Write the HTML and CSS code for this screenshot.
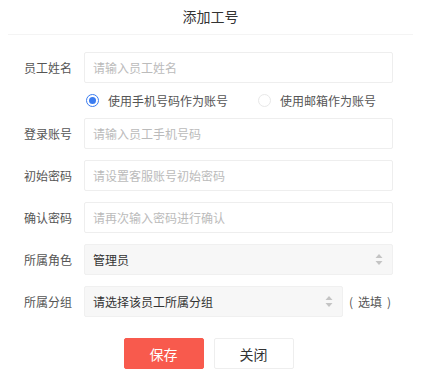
FILE: index.html
```html
<!DOCTYPE html>
<html>
	<head>
		<title>添加工号</title>
		<meta charset="UTF-8">
		<link rel="stylesheet" href="styles.css">
	</head>
	<body>
		<div class="title">添加工号</div>
		<form class="form">
			<div class="row">
				<label class="lbl">员工姓名</label>
				<input class="inp" type="text" placeholder="请输入员工姓名" />
			</div>
			<div class="radios">
				<span class="radio on"><i></i>使用手机号码作为账号</span>
				<span class="radio"><i></i>使用邮箱作为账号</span>
			</div>
			<div class="row">
				<label class="lbl">登录账号</label>
				<input class="inp" type="text" placeholder="请输入员工手机号码" />
			</div>
			<div class="row">
				<label class="lbl">初始密码</label>
				<input class="inp" type="text" placeholder="请设置客服账号初始密码" />
			</div>
			<div class="row">
				<label class="lbl">确认密码</label>
				<input class="inp" type="text" placeholder="请再次输入密码进行确认" />
			</div>
			<div class="row">
				<label class="lbl">所属角色</label>
				<div class="sel">
					<span>管理员</span>
					<svg width="8" height="13" viewBox="0 0 8 13"><path d="M4 1 L7.5 5 H0.5 Z" fill="#c4c4c4"/><path d="M4 12 L7.5 8 H0.5 Z" fill="#c4c4c4"/></svg>
				</div>
			</div>
			<div class="row">
				<label class="lbl">所属分组</label>
				<div class="sel short">
					<span>请选择该员工所属分组</span>
					<svg width="8" height="13" viewBox="0 0 8 13"><path d="M4 1 L7.5 5 H0.5 Z" fill="#c4c4c4"/><path d="M4 12 L7.5 8 H0.5 Z" fill="#c4c4c4"/></svg>
				</div>
				<span class="note"><b>(</b>选填<b>)</b></span>
			</div>
			<div class="btns">
				<input class="btn save" type="button" value="保存" />
				<input class="btn close" type="button" value="关闭" />
			</div>
		</form>
	</body>
</html>
```
FILE: styles.css
```css
body {
	margin: 0;
	background: #fff;
	font-family: "Noto Sans CJK SC", "Noto Sans", sans-serif;
	color: #333;
}
.title {
	height: 34px;
	line-height: 32px;
	text-align: center;
	font-size: 14px;
	color: #333;
	margin: 0 8px;
	border-bottom: 1px solid #f4f4f4;
}
.form {
	margin: 0;
	padding: 17px 28px 0 24px;
	display: flex;
	flex-direction: column;
	gap: 11px;
}
.row {
	display: flex;
	align-items: center;
	height: 31px;
}
.lbl {
	width: 60px;
	font-size: 12px;
	color: #555;
}
.inp {
	box-sizing: border-box;
	width: 309px;
	height: 31px;
	border: 1px solid #eeeeee;
	border-radius: 2px;
	padding: 0 8px;
	font-family: inherit;
	font-size: 12px;
	color: #333;
	outline: none;
}
.inp::placeholder {
	color: #bbb;
}
.radios {
	display: flex;
	height: 13px;
	align-items: center;
	padding-left: 62px;
	font-size: 12px;
	color: #555;
}
.radio {
	display: flex;
	align-items: center;
	width: 172px;
	flex-shrink: 0;
}
.radio i {
	box-sizing: border-box;
	width: 13px;
	height: 13px;
	border-radius: 50%;
	border: 1px solid #e8e8e8;
	margin-right: 9px;
	position: relative;
}
.radio.on i {
	border-color: #3b7cf0;
}
.radio.on i::after {
	content: "";
	position: absolute;
	left: 2px;
	top: 2px;
	width: 7px;
	height: 7px;
	border-radius: 50%;
	background: #3b7cf0;
}
.sel {
	box-sizing: border-box;
	width: 309px;
	height: 31px;
	background: #f7f7f7;
	border: 1px solid #f0f0f0;
	border-radius: 2px;
	padding: 0 9px 0 8px;
	display: flex;
	align-items: center;
	justify-content: space-between;
	font-size: 12px;
	color: #333;
}
.sel.short {
	width: 259px;
}
.note {
	font-size: 12px;
	color: #555;
	margin-left: 6px;
	display: flex;
	gap: 5px;
}
.note b {
	font-weight: normal;
}
.btns {
	display: flex;
	justify-content: center;
	gap: 10px;
	margin-top: 10px;
}
.btn {
	width: 80px;
	height: 31px;
	border-radius: 2px;
	font-family: inherit;
	font-size: 14px;
	cursor: pointer;
}
.save {
	background: #f85a4d;
	border: 1px solid #f85a4d;
	color: #fff;
}
.close {
	background: #fff;
	border: 1px solid #eee;
	color: #333;
}
```
